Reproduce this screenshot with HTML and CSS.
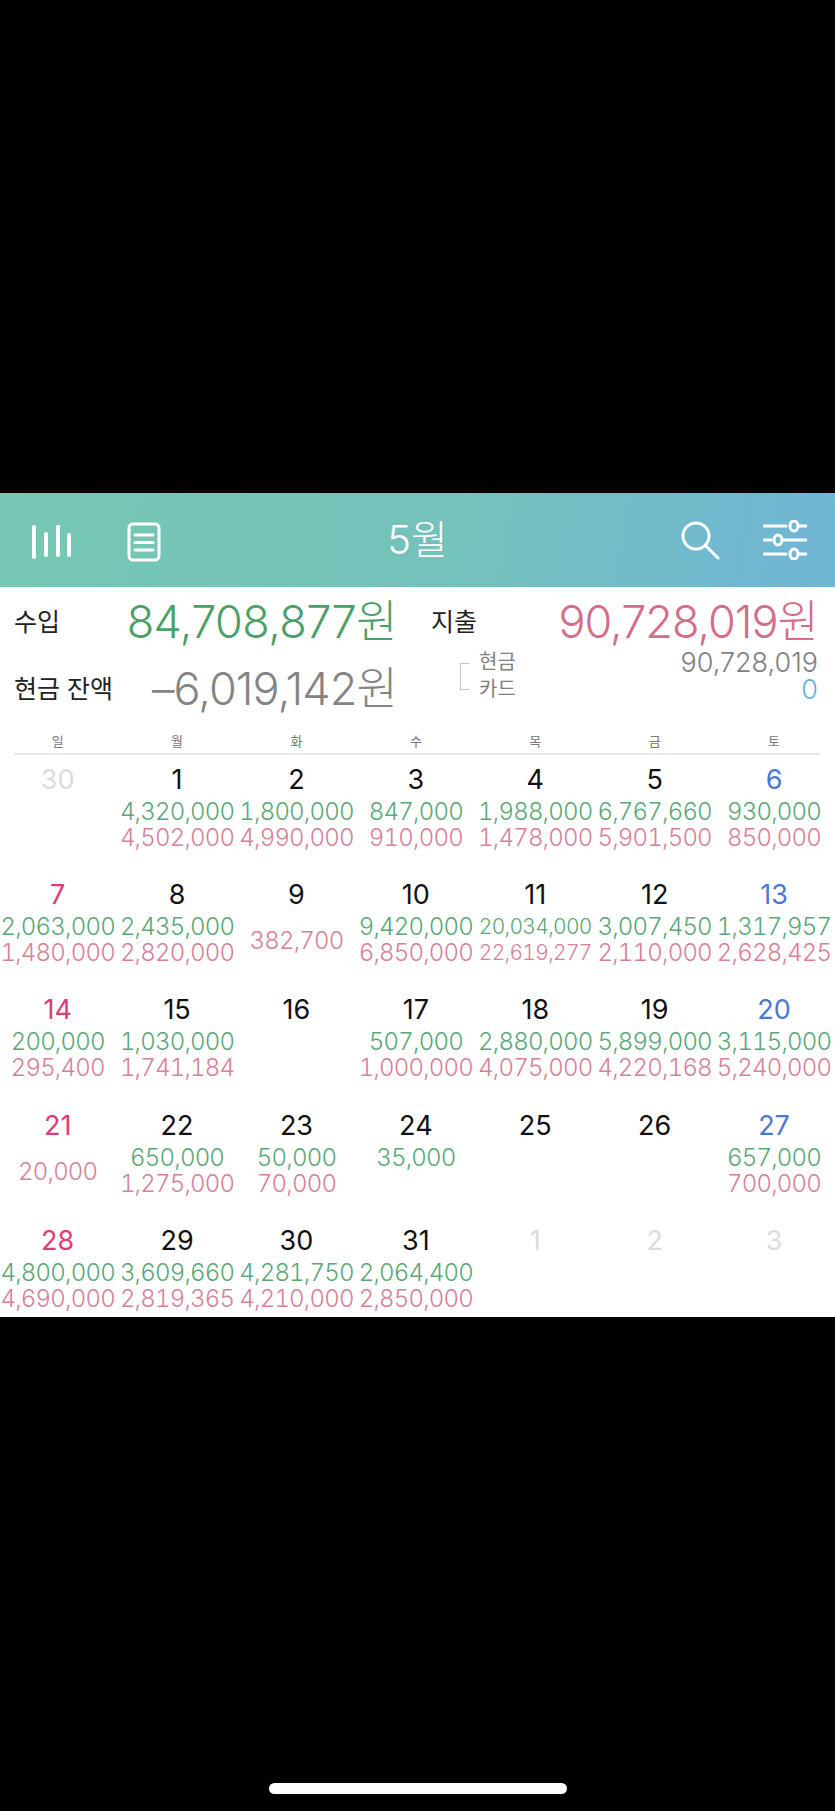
FILE: index.html
```html
<!DOCTYPE html>
<html lang="ko">

<head>
    <meta charset="UTF-8" />
    <meta name="viewport" content="width=device-width, initial-scale=1.0" />
    <title>가계부 5월</title>
    <link rel="stylesheet" href="styles.css">
</head>

<body>
    <div class="screen">
        <header class="topbar">
            <div class="topbar-left">
                <svg class="icon icon-bars" viewBox="0 0 40 34" width="40" height="34">
                    <path d="M2 2V32M14 9V30M26 1V30M37 10V30" />
                </svg>
                <svg class="icon icon-doc" viewBox="0 0 34 40" width="34" height="40">
                    <rect x="2" y="2" width="30" height="36" rx="4" />
                    <path d="M8 13H26M8 20.500H26M8 28H26" />
                </svg>
            </div>
            <h1 class="title">5월</h1>
            <div class="topbar-right">
                <svg class="icon icon-search" viewBox="0 0 40 40" width="40" height="40">
                    <circle cx="16" cy="16" r="13" />
                    <path d="M25.500 25.500L38 38" />
                </svg>
                <svg class="icon icon-sliders" viewBox="0 0 44 40" width="44" height="40">
                    <path d="M1 6H23M36 6H43M1 20H8M21 20H43M1 34H23M36 34H43" />
                    <ellipse cx="31" cy="6" rx="4" ry="5" />
                    <ellipse cx="15" cy="20" rx="4" ry="5" />
                    <ellipse cx="31" cy="34" rx="4" ry="5" />
                </svg>
            </div>
        </header>

        <section class="summary">
            <div class="summary-col summary-income">
                <div class="sum-row">
                    <span class="sum-label">수입</span>
                    <span class="sum-big green">84,708,877원</span>
                </div>
                <div class="sum-row sum-row-low">
                    <span class="sum-label">현금 잔액</span>
                    <span class="sum-big gray">–6,019,142원</span>
                </div>
            </div>
            <div class="summary-col summary-expense">
                <div class="sum-row">
                    <span class="sum-label">지출</span>
                    <span class="sum-big pink">90,728,019원</span>
                </div>
                <div class="sum-detail">
                    <div class="bracket"></div>
                    <div class="detail-labels">
                        <span>현금</span>
                        <span>카드</span>
                    </div>
                    <div class="detail-values">
                        <span>90,728,019</span>
                        <span class="blue">0</span>
                    </div>
                </div>
            </div>
        </section>

        <section class="calendar">
            <div class="weekdays">
                <div class="weekdays-row">
                    <span>일</span><span>월</span><span>화</span><span>수</span><span>목</span><span>금</span><span>토</span>
                </div>
            </div>
            <div class="weeks">
                <div class="day"><b class="muted">30</b></div>
                <div class="day"><b>1</b><i class="in">4,320,000</i><i class="out">4,502,000</i></div>
                <div class="day"><b>2</b><i class="in">1,800,000</i><i class="out">4,990,000</i></div>
                <div class="day"><b>3</b><i class="in">847,000</i><i class="out">910,000</i></div>
                <div class="day"><b>4</b><i class="in">1,988,000</i><i class="out">1,478,000</i></div>
                <div class="day"><b>5</b><i class="in">6,767,660</i><i class="out">5,901,500</i></div>
                <div class="day"><b class="sat">6</b><i class="in">930,000</i><i class="out">850,000</i></div>

                <div class="day"><b class="sun">7</b><i class="in">2,063,000</i><i class="out">1,480,000</i></div>
                <div class="day"><b>8</b><i class="in">2,435,000</i><i class="out">2,820,000</i></div>
                <div class="day"><b>9</b><i class="out mid">382,700</i></div>
                <div class="day"><b>10</b><i class="in">9,420,000</i><i class="out">6,850,000</i></div>
                <div class="day"><b>11</b><i class="in small">20,034,000</i><i class="out small">22,619,277</i></div>
                <div class="day"><b>12</b><i class="in">3,007,450</i><i class="out">2,110,000</i></div>
                <div class="day"><b class="sat">13</b><i class="in">1,317,957</i><i class="out">2,628,425</i></div>

                <div class="day"><b class="sun">14</b><i class="in">200,000</i><i class="out">295,400</i></div>
                <div class="day"><b>15</b><i class="in">1,030,000</i><i class="out">1,741,184</i></div>
                <div class="day"><b>16</b></div>
                <div class="day"><b>17</b><i class="in">507,000</i><i class="out">1,000,000</i></div>
                <div class="day"><b>18</b><i class="in">2,880,000</i><i class="out">4,075,000</i></div>
                <div class="day"><b>19</b><i class="in">5,899,000</i><i class="out">4,220,168</i></div>
                <div class="day"><b class="sat">20</b><i class="in">3,115,000</i><i class="out">5,240,000</i></div>

                <div class="day"><b class="sun">21</b><i class="out mid">20,000</i></div>
                <div class="day"><b>22</b><i class="in">650,000</i><i class="out">1,275,000</i></div>
                <div class="day"><b>23</b><i class="in">50,000</i><i class="out">70,000</i></div>
                <div class="day"><b>24</b><i class="in">35,000</i></div>
                <div class="day"><b>25</b></div>
                <div class="day"><b>26</b></div>
                <div class="day"><b class="sat">27</b><i class="in">657,000</i><i class="out">700,000</i></div>

                <div class="day"><b class="sun">28</b><i class="in">4,800,000</i><i class="out">4,690,000</i></div>
                <div class="day"><b>29</b><i class="in">3,609,660</i><i class="out">2,819,365</i></div>
                <div class="day"><b>30</b><i class="in">4,281,750</i><i class="out">4,210,000</i></div>
                <div class="day"><b>31</b><i class="in">2,064,400</i><i class="out">2,850,000</i></div>
                <div class="day"><b class="muted">1</b></div>
                <div class="day"><b class="muted">2</b></div>
                <div class="day"><b class="muted">3</b></div>
            </div>
        </section>

        <div class="home-area">
            <div class="home-bar"></div>
        </div>
    </div>
</body>

</html>
```

FILE: styles.css
```css
* {
    box-sizing: border-box;
    margin: 0;
    padding: 0;
}

body {
    font-family: 'Inter', 'Noto Sans CJK KR', sans-serif;
    background: #000;
    width: 835px;
    height: 1811px;
    overflow: hidden;
}

.screen {
    height: 1811px;
    padding-top: 493px;
    display: flex;
    flex-direction: column;
}

/* top bar */
.topbar {
    height: 94px;
    flex: none;
    background: linear-gradient(100deg, #76c7b3 0%, #74c2bc 55%, #70b5d6 100%);
    display: flex;
    align-items: center;
    justify-content: space-between;
    padding: 0 28px 0 32px;
    position: relative;
}

.topbar-left {
    display: flex;
    align-items: center;
    gap: 55px;
    padding-top: 3px;
}

.topbar-right {
    display: flex;
    align-items: center;
    gap: 43px;
}

.icon {
    display: block;
    fill: none;
    stroke: #fff;
    stroke-width: 3;
    stroke-linecap: round;
}

.icon-bars {
    stroke-width: 4;
}

.icon-sliders ellipse {
    stroke-width: 3;
}

.title {
    position: absolute;
    left: 300px;
    right: 300px;
    text-align: center;
    font-size: 40px;
    line-height: 48px;
    font-weight: 300;
    color: #fff;
}

/* summary */
.summary {
    height: 144px;
    flex: none;
    background: #fff;
    display: flex;
    padding: 0 17px 0 14px;
}

.summary-income {
    width: 383px;
}

.summary-expense {
    flex: 1;
    margin-left: 34px;
}

.sum-row {
    display: flex;
    align-items: center;
    justify-content: space-between;
    height: 60px;
    margin-top: 5px;
}

.sum-row-low {
    margin-top: 7px;
}

.sum-label {
    font-size: 25px;
    line-height: 30px;
    color: #222;
}

.sum-big {
    font-size: 45px;
    line-height: 50px;
    font-weight: 300;
    letter-spacing: -0.6px;
}

.green {
    color: #4c9f68;
}

.pink {
    color: #d56c88;
    letter-spacing: -1px;
}

.gray {
    color: #848484;
    letter-spacing: -0.9px;
}

.blue {
    color: #66b3d6;
}

.sum-detail {
    display: flex;
    align-items: center;
    margin-left: 29px;
    margin-top: -3px;
}

.bracket {
    width: 9px;
    height: 27px;
    border: 1px solid #c4c4c4;
    border-right: none;
    margin-right: 10px;
}

.detail-labels,
.detail-values {
    display: flex;
    flex-direction: column;
    line-height: 27px;
}

.detail-labels {
    font-size: 20px;
    color: #808080;
}

.detail-values {
    flex: 1;
    text-align: right;
    font-size: 27px;
    font-weight: 300;
    color: #808080;
}

/* calendar */
.calendar {
    background: #fff;
    flex: none;
    height: 586px;
}

.weekdays {
    margin: 0 15px 0 14px;
    border-bottom: 2px solid #e6e6e6;
    height: 24px;
}

.weekdays-row {
    display: grid;
    grid-template-columns: repeat(7, 119.4px);
    margin: 0 -15px 0 -16px;
    font-size: 13px;
    color: #777;
    text-align: center;
    line-height: 21px;
}

.weeks {
    display: grid;
    grid-template-columns: repeat(7, 119.4px);
    grid-auto-rows: 115.200px;
    margin-left: -2px;
}

.day {
    display: flex;
    flex-direction: column;
    align-items: center;
    padding-top: 8px;
}

.day b {
    font-size: 27px;
    font-weight: 400;
    line-height: 34px;
    color: #111;
}

.day i {
    font-style: normal;
    font-weight: 300;
    font-size: 24px;
    line-height: 26px;
    white-space: nowrap;
    font-variant-numeric: tabular-nums;
    letter-spacing: -0.8px;
}

.day i.in {
    margin-top: 2px;
    color: #5aa877;
}

.day i.out {
    color: #d97f99;
}

.day i.small {
    font-size: 21px;
    letter-spacing: -0.7px;
}

.day i.mid {
    margin-top: 16px;
}

.day b.muted {
    color: #dcdcdc;
}

.day b.sun {
    color: #e2397a;
}

.day b.sat {
    color: #4a78d4;
}

/* home indicator */
.home-area {
    flex: 1;
    display: flex;
    justify-content: center;
    align-items: flex-end;
    padding-bottom: 17px;
}

.home-bar {
    width: 298px;
    height: 11px;
    border-radius: 6px;
    background: #fff;
}
```
